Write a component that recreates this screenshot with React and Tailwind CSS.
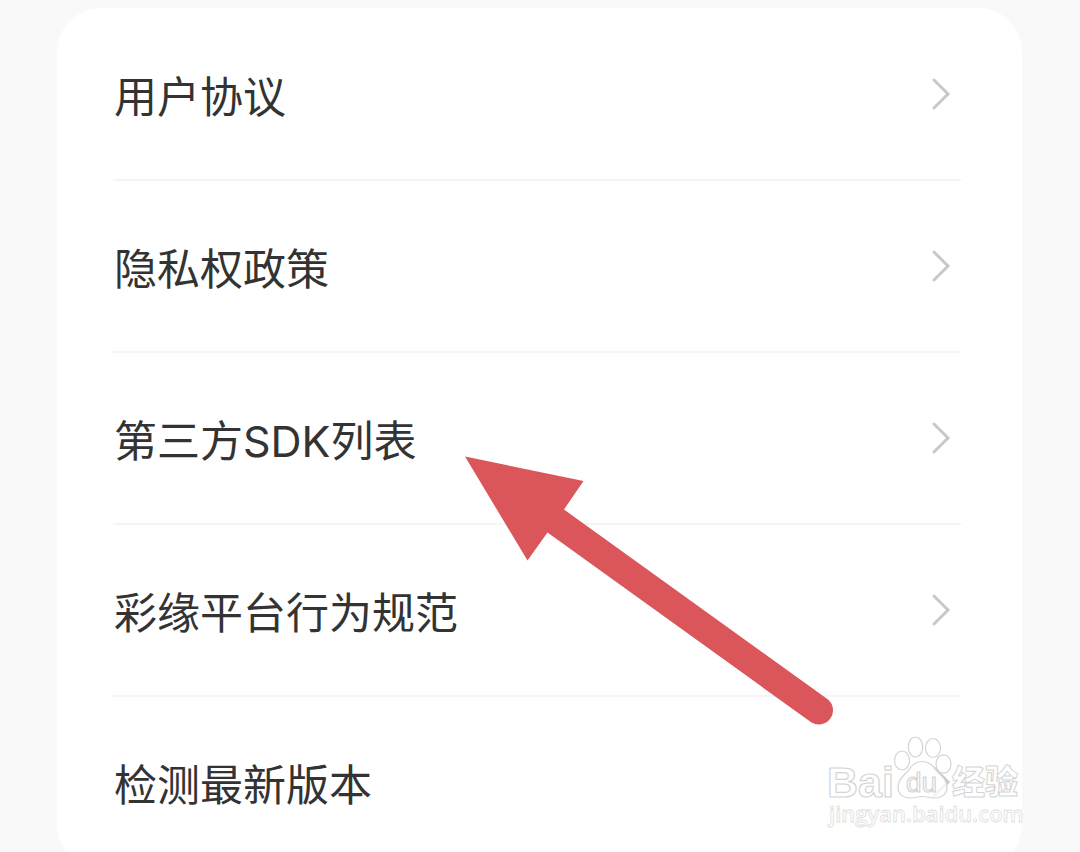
const items = ["用户协议", "隐私权政策", "第三方SDK列表", "彩缘平台行为规范", "检测最新版本"];

function Chevron() {
  return (
    <svg className="mb-1.5 h-9 w-6 shrink-0" viewBox="0 0 24 36" fill="none" aria-hidden="true">
      <path d="M5 4 L19 18 L5 32" stroke="#c8c8c8" strokeWidth="3" strokeLinecap="round" />
    </svg>
  );
}

function Row({ label }) {
  return (
    <li className="border-b-2 border-[#f5f5f5] last:border-transparent">
      <a href="#" className="flex h-[170px] items-center justify-between pl-px pr-2 pt-1.5">
        <span>{label}</span>
        <Chevron />
      </a>
    </li>
  );
}

function Arrow() {
  return (
    <svg
      className="pointer-events-none absolute left-[465px] top-[456px] h-[270px] w-[370px]"
      viewBox="465 456 370 270"
      aria-hidden="true"
    >
      <path
        d="M465 456.500 L583.500 481 L564 509.500 L828 699.500 A14.200 14.200 0 0 1 811.500 722.500 L547.500 532.500 L527.500 560.500 Z"
        fill="#db565b"
      />
    </svg>
  );
}

function Watermark() {
  return (
    <svg
      className="pointer-events-none absolute left-[820px] top-[730px] h-[105px] w-[210px]"
      viewBox="820 730 210 105"
      fill="#ffffff"
      fillOpacity="0.8"
      stroke="#d4d4d4"
      strokeWidth="1.200"
      strokeLinejoin="round"
      role="img"
      aria-label="Baidu 经验"
    >
      <text x="827" y="797" fontFamily="'Liberation Sans', sans-serif" fontWeight="700" fontSize="43">
        Bai
      </text>
      <ellipse cx="902" cy="760.500" rx="7.500" ry="9.500" />
      <ellipse cx="915.500" cy="747" rx="7.200" ry="10" />
      <ellipse cx="933" cy="748" rx="7.500" ry="9.500" />
      <ellipse cx="943.500" cy="764" rx="7.500" ry="9.200" />
      <path d="M922 761.500 C930 761.500 934 767 938 772 C943 777 947 781 947 787 C947 794 942 798 935 798 C930 798 927 796.500 922 796.500 C917 796.500 915 798 910 798 C903 798 898 794 898 787 C898 781 902 777 907 772 C911 767 914 761.500 922 761.500 Z" />
      <text x="906" y="792" fontFamily="'Liberation Sans', sans-serif" fontWeight="400" fontSize="28">
        du
      </text>
      <text x="952" y="794" fontFamily="'Noto Sans CJK SC', sans-serif" fontWeight="900" fontSize="33" strokeWidth="1">
        经验
      </text>
      <text x="829" y="822" fontFamily="'Open Sans', sans-serif" fontWeight="600" fontSize="22" stroke="#dedede" strokeWidth="0.800">
        jingyan.baidu.com
      </text>
    </svg>
  );
}

export default function App() {
  return (
    <main className="relative h-screen overflow-hidden bg-[#f9f9f9] pl-[57px] pr-[58px] pt-2 font-['Inter','Noto_Sans_CJK_SC',sans-serif] text-[43px] leading-none text-[#333333]">
      <ul className="rounded-[44px] bg-white pl-14 pr-[61px] pt-px">
        {items.map((label) => (
          <Row key={label} label={label} />
        ))}
      </ul>
      <Arrow />
      <Watermark />
    </main>
  );
}
